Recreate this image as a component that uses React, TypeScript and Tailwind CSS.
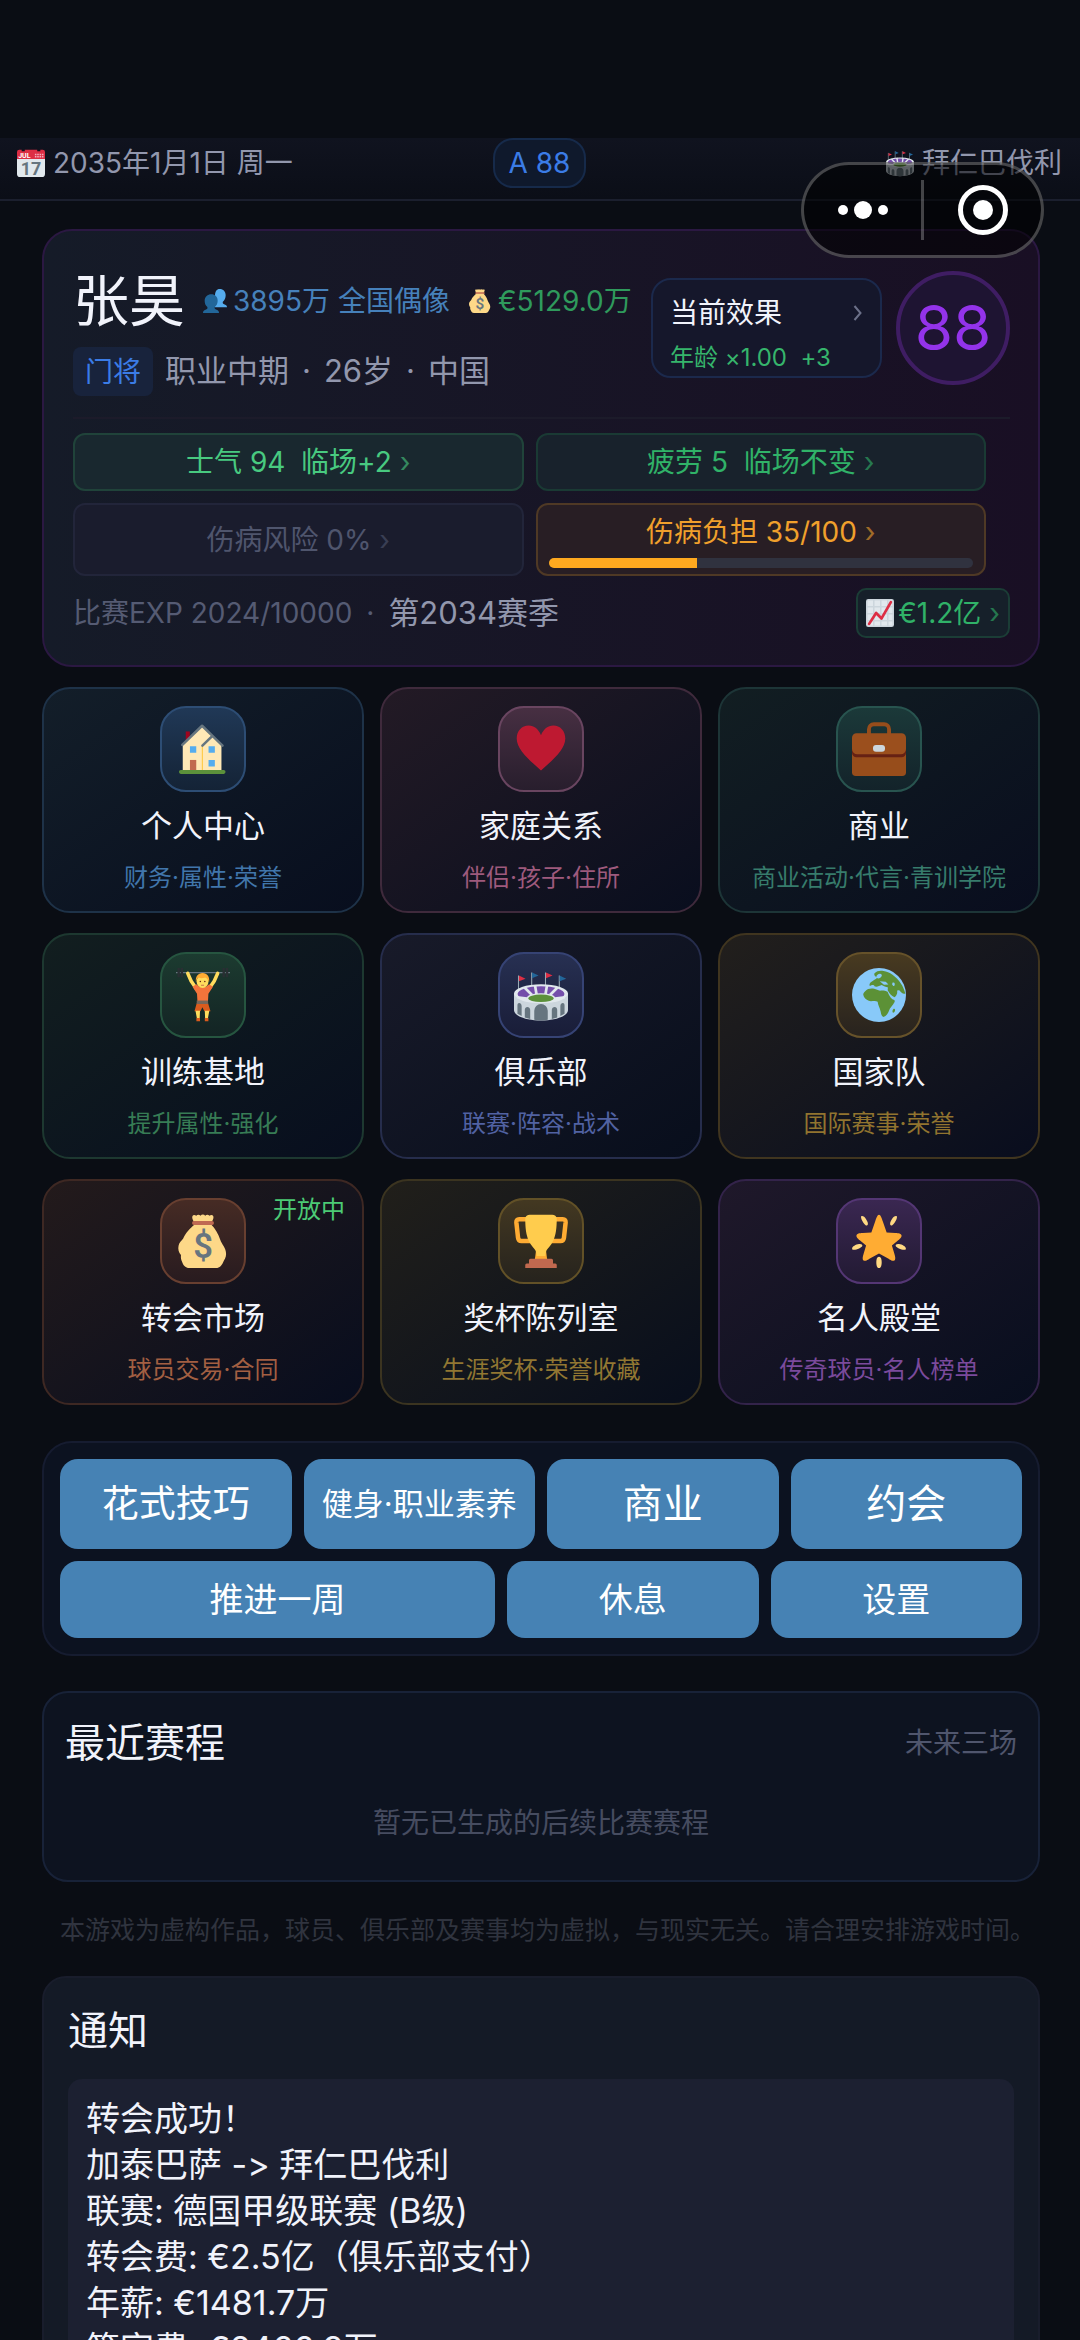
import { useState } from "react";
import type { ReactNode } from "react";

type Entry = {
  id: string;
  title: string;
  desc: string;
  icon: ReactNode;
  card: string;
  tile: string;
  descColor: string;
  badge?: string;
};

type Chip = {
  id: string;
  text: string;
  style: string;
  progress?: number;
};

/* ---------- アイコン ---------- */

function CalendarIcon() {
  return (
    <svg viewBox="0 0 36 36" className="h-7 w-7 shrink-0" aria-hidden="true">
      <path fill="#E1E8ED" d="M36 32a4 4 0 0 1-4 4H4a4 4 0 0 1-4-4V9h36z" />
      <path fill="#DD2E44" d="M3 1h3v2h4V1h16v2h4V1h3a3 3 0 0 1 3 3v9H0V4a3 3 0 0 1 3-3z" />
      <path fill="#F4ABBA" d="M23 6h2v2h-2zM26 6h2v2h-2zM29 6h2v2h-2zM32 6h2v2h-2zM23 9h2v2h-2zM26 9h2v2h-2zM29 9h2v2h-2zM32 9h2v2h-2z" />
      <text x="1.500" y="11" fontSize="9" fontWeight="700" fontFamily="Roboto, sans-serif" fill="#FFFFFF">
        JUL
      </text>
      <text x="18" y="33" fontSize="23" fontWeight="700" textAnchor="middle" fontFamily="Roboto, sans-serif" fill="#66757F">
        17
      </text>
    </svg>
  );
}

function FansIcon() {
  return (
    <svg viewBox="0 0 36 36" className="h-6 w-6 shrink-0" aria-hidden="true">
      <path
        fill="#55ACEE"
        d="M25 0c5.500 0 9 4 9 9.500 0 4.200-1.600 7.700-4.200 9.600-.8 2.400.4 3.400 2.700 4.200C34.800 24.100 36 25 36 27.500H18V10c0-6 2.500-10 7-10z"
      />
      <path
        fill="#226699"
        d="M12.500 8c5.500 0 9.500 4 9.500 9.700 0 4-1.700 7.500-4.300 9.300-.8 2.400.4 3.300 2.600 4.100 2.700.9 3.700 2.200 3.700 4.900H0c0-2.700 1.200-4 3.800-4.900 2.300-.8 3.500-1.700 2.700-4.100C3.900 25.200 2.500 21.700 2.500 17.700 2.500 12 7 8 12.500 8z"
      />
    </svg>
  );
}

function MoneyBagIcon({ className }: { className: string }) {
  return (
    <svg viewBox="0 0 36 36" className={className} aria-hidden="true">
      <path
        fill="#FDD888"
        d="M12.200 5.500C11 3.800 10.500 2.300 11 1.300c.5-.9 1.700-.8 2.500-.1.900-1 2-1 2.800-.1.900-1 2.300-1 3.200 0 .9-.9 2-.9 2.800.1.800-.7 2-.8 2.500.1.500 1 0 2.500-1.200 4.200v1.700c2.400 2.500 4.700 6.200 5.900 10 1 3.200 3.900 5.200 3.900 9.400 0 2.300-1.200 3.900-1.900 5.400-.9 2.200-2.300 4-4.800 4H8.900c-2.500 0-4-1.700-4.800-4-.6-1.400-1-2.200-.8-4.600-1.500-1.700-2.100-4.100-1.600-6.300.4-2.100 1.900-2.900 3.100-4.700 1.500-3.700 4.900-7 7.400-9.200z"
      />
      <path fill="#BF6952" d="M12 4.700h12a1.300 1.300 0 0 1 0 2.600H12a1.300 1.300 0 0 1 0-2.600z" />
      <text x="18" y="29.500" fontSize="23" fontWeight="600" textAnchor="middle" fontFamily="Roboto, sans-serif" fill="#67757F">
        $
      </text>
    </svg>
  );
}

function ChartIcon() {
  return (
    <svg viewBox="0 0 36 36" className="h-7 w-7 shrink-0" aria-hidden="true">
      <rect width="36" height="36" rx="3" fill="#CCD6DD" />
      <path fill="#E1E8ED" d="M2 2h7v7H2zM11 2h7v7h-7zM20 2h7v7h-7zM29 2h5v7h-5zM2 11h7v7H2zM11 11h7v7h-7zM20 11h7v7h-7zM29 11h5v7h-5zM2 20h7v7H2zM11 20h7v7h-7zM20 20h7v7h-7zM29 20h5v7h-5zM2 29h7v5H2zM11 29h7v5h-7zM20 29h7v5h-7zM29 29h5v5h-5z" />
      <path fill="none" stroke="#DD2E44" strokeWidth="3.500" strokeLinecap="round" strokeLinejoin="round" d="M4 32l9-14 7 7L32 4" />
    </svg>
  );
}

function StadiumIcon({ className }: { className: string }) {
  return (
    <svg viewBox="0 0 36 36" className={className} aria-hidden="true">
      <path stroke="#99AAB5" strokeWidth=".7" d="M3 5v12M11.800 3v10M21 3v10M30.200 5v12" />
      <path fill="#DD2E44" d="M3.300 5l4.400 2.100-4.400 1.800zM21.300 3l4.400 2-4.400 1.900z" />
      <path fill="#226699" d="M12 3l4.400 2L12 6.900zM30.400 5l4.400 2.100-4.400 1.800z" />
      <path fill="#CCD6DD" d="M0 17h36v11c0 4-8 7-18 7S0 32 0 28z" />
      <path
        fill="#66757F"
        d="M13.500 34.500v-6a4.500 4.500 0 0 1 9 0v6c-3 .5-6 .5-9 0zM7.200 33v-5c0-3 3.600-2.500 3.600 0v6zM25.200 34v-6c0-2.500 3.600-3 3.600 0v5zM2.300 30.500V25c0-2.600 2.800-1.800 2.800.5V32zM30.900 32v-6.500c0-2.300 2.800-3.100 2.800-.5v5.500z"
      />
      <ellipse cx="18" cy="17" rx="18" ry="6.200" fill="#E1E8ED" />
      <ellipse cx="18" cy="17.300" rx="15.600" ry="5.200" fill="#744EAA" />
      <path stroke="#E1E8ED" strokeWidth="1.800" d="M14 11.500l1 6M22 11.500l-1 6M7 13l5 5M29 13l-5 5M2 19.500l8 1M34 19.500l-8 1" />
      <path fill="#E1E8ED" d="M3 20.500c3 2 8 2.900 15 2.900s12-.9 15-2.900z" />
      <ellipse cx="18" cy="20" rx="9.400" ry="3.200" fill="#E1E8ED" />
      <ellipse cx="18" cy="20.200" rx="8.500" ry="2.500" fill="#5C913B" />
    </svg>
  );
}

function HouseIcon() {
  return (
    <svg viewBox="0 0 36 36" className="h-[54px] w-[54px]" aria-hidden="true">
      <path fill="#A0041E" d="M6.500 6.300h2.700v7H6.500z" />
      <path fill="#FFE8B6" d="M4.500 15L17.400 2.500 24.300 9l6 6.300V32.500H4.500z" />
      <path fill="#FFCC4D" d="M17.200 16h.8v16h-.8z" />
      <path
        fill="none"
        stroke="#66757F"
        strokeWidth="1.700"
        strokeLinecap="round"
        strokeLinejoin="round"
        d="M4.200 15.300L17.400 2.500l6.900 6.700 6.700 6.500M17.600 15.700l6.700-6.500"
      />
      <path fill="#55ACEE" d="M9.300 16.200h4.200v4.300H9.300zM21.700 16.200h4.200v4.300h-4.200zM21.700 25.300h4.200v4.300h-4.200z" />
      <path fill="#C1694F" d="M9.300 25.300h4.200v7H9.300z" />
      <rect x="2" y="32" width="31" height="2.600" rx="1.200" fill="#5C913B" />
    </svg>
  );
}

function HeartIcon() {
  return (
    <svg viewBox="0 0 36 36" className="h-[54px] w-[54px]" aria-hidden="true">
      <path
        fill="#BE1931"
        d="M18 8.800C16.400 4.700 13.400 2.300 9.800 2.300 5.200 2.300 1.800 5.900 1.800 11c0 7.600 8.700 14.400 16.200 21.400C25.500 25.400 34.200 18.600 34.200 11c0-5.100-3.400-8.700-8-8.700-3.600 0-6.600 2.400-8.200 6.500z"
      />
    </svg>
  );
}

function BriefcaseIcon() {
  return (
    <svg viewBox="0 0 36 36" className="h-[54px] w-[54px]" aria-hidden="true">
      <path
        fill="none"
        stroke="#974D1B"
        strokeWidth="2.600"
        d="M11.300 9V4.800a3.300 3.300 0 0 1 3.300-3.300h6.800a3.300 3.300 0 0 1 3.300 3.300V9"
      />
      <path fill="#974D1B" d="M0 19h36v14.500a2.500 2.500 0 0 1-2.500 2.500h-31A2.500 2.500 0 0 1 0 33.500z" />
      <path fill="#662113" d="M0 18h36v2.500a3 3 0 0 1-3 3H3a3 3 0 0 1-3-3z" />
      <path fill="#9B4F1D" d="M3 7.500h30a3 3 0 0 1 3 3V18a3.500 3.500 0 0 1-3.500 3.500h-29A3.500 3.500 0 0 1 0 18v-7.500a3 3 0 0 1 3-3z" />
      <rect x="14" y="15.300" width="8" height="4.600" rx="2" fill="#CCD6DD" />
    </svg>
  );
}

function LifterIcon() {
  return (
    <svg viewBox="0 0 36 36" className="h-[54px] w-[54px]" aria-hidden="true">
      <path stroke="#67757F" strokeWidth=".8" d="M0 3.100h36" />
      <path fill="#292F33" d="M1 0h1.600v6.200H1zM3.100 0h1.600v6.200H3.100zM31 0h1.600v6.200H31zM33.200 0h1.600v6.200h-1.600z" />
      <path stroke="#FFDC5D" strokeWidth="2.300" strokeLinecap="round" fill="none" d="M7.800 3.500l2.300 5.200 3.400 5M27.800 3.500l-2.300 5.200-3.400 5" />
      <path fill="#F4743B" d="M11 12.500l2.500-1.700 2.300 1.900h4l2.300-1.900 2.500 1.700-3 4.700-.3 5.300h-7l-.3-5.300z" />
      <path fill="#DA5B1E" d="M13.800 23.500h7.600l1.600 5.300h-4.100l-1.300-2.700-1.300 2.700h-4z" />
      <path fill="#78665A" d="M13.800 21.700h7.600v2.300h-7.600z" />
      <path fill="#FFDC5D" d="M13 28.500h3l-.2 5h-1.900zM19.200 28.500h3l-.9 5h-1.900z" />
      <path fill="#DA5B1E" d="M13.600 33.300h2.400v2.200h-2.400zM19.200 33.300h2.400v2.200h-2.400z" />
      <ellipse cx="17.700" cy="9" rx="4" ry="4.300" fill="#FFDC5D" />
      <path fill="#FFAC33" d="M13.300 9.300c-.5-3.700 1.400-6 4.400-6s4.900 2.300 4.400 6c-.7-1.500-1.700-2.700-2.700-3-2 .8-4 .4-4.800.2-.8.900-1 1.900-1.300 2.800z" />
      <circle cx="16.200" cy="9" r=".5" fill="#662113" />
      <circle cx="19.200" cy="9" r=".5" fill="#662113" />
      <path stroke="#C1694F" strokeWidth=".6" d="M16.700 11.500h2" />
    </svg>
  );
}

function GlobeIcon() {
  return (
    <svg viewBox="0 0 36 36" className="h-[54px] w-[54px]" aria-hidden="true">
      <circle cx="18" cy="18" r="18" fill="#88C9F9" />
      <path
        fill="#5C9136"
        d="M15 3.500C16.500 1.800 19 1.500 21 2c2 .3 4 1 6 2.500 4.500 3.200 7.500 8 8.500 12.500-1.500.8-2.600-.8-3.800-2-1.400-.4-2.400.4-2.900 1.600-.8 1.200-1.700.8-2.600-.4-1.600-.4-2.200-1.800-1.200-3-1.800-.6-3.600-.6-5.200-1.800-1.400.6-3 1.400-4.600 1-.6-1.400-2.200-1.200-3.200-.4-1-1 .4-2.800 1.800-3.400 1.200-.8 2.600-1.200 3-2.400-1.200-.4-2.400-1.400-1.800-2.700z"
      />
      <path fill="#88C9F9" d="M16.800 4.600c1.800-1.400 3.600-.6 3 .8s-2.200 2-3.200 1.300c-.6-.6-.4-1.500.2-2.100zM18.500 8.800l4 .4 1.800 1.800-3 .2zM27 9.800c1.600-.4 2 1.200 1 2.400-1-.2-1.600-1.400-1-2.400z" />
      <path
        fill="#5C9136"
        d="M8.800 15.500c1.400-1.700 3.900-2 6-1.600 1.500.2 2.400 1.100 3.900 1.200 1.500-.4 3.600 0 5 .7.9 1.900 1.700 4.100 3.500 5.200 1 .3 1.600.6 1.200 1.700-1 2.100-3.200 3.700-3.800 6-.6 1.600-1.600 3.500-3.600 4-1.500-.5-1.600-2.500-2-4-.4-2.200-1.700-4-1.900-6.200-1.700-1.200-4 .1-5.900-.6-1.800-.6-3.400-2.200-3.700-4-.1-.9.600-1.700 1.300-2.400z"
      />
      <path fill="#5C9136" d="M27.500 27.500c.9-.8 1.500.1 1.100 1.200s-1.500 1.600-1.600.5c-.1-.6.1-1.300.5-1.700zM24 11.500c1.800-.6 4 .2 5.500 2.200 1.200 1.800.8 4.600-1.200 5.800-2-.6-3.400-2.600-4.500-4.600z" />
    </svg>
  );
}

function TrophyIcon() {
  return (
    <svg viewBox="0 0 36 36" className="h-[54px] w-[54px]" aria-hidden="true">
      <path
        fill="none"
        stroke="#FFAC33"
        strokeWidth="3"
        strokeLinejoin="round"
        d="M9 3.500H3.500c-1.500 0-2 .8-1.900 2.300l1.100 10c.2 1.600 1 2.200 2.300 2.200h6M27 3.500h5.500c1.500 0 2 .8 1.900 2.300l-1.100 10c-.2 1.600-1 2.200-2.300 2.200h-6"
      />
      <path fill="#FFAC33" d="M15 22h6l1.200 9h-8.400z" />
      <path
        fill="#FFCC4D"
        d="M10.500.500h15C27 .500 28.500 1.500 28.500 3c0 6-.5 11-2.500 15.200-1.600 3.400-3.600 4.600-4.500 6.500-.4 1-.6 2.200-.6 3.300h-5.800c0-1.100-.2-2.300-.6-3.300-.9-1.900-2.900-3.100-4.500-6.500C8 14 7.500 9 7.500 3c0-1.500 1.500-2.500 3-2.500z"
      />
      <path fill="#C1694F" d="M11 29.800h14a1 1 0 0 1 1 1V33h1.500a1 1 0 0 1 1 1v2h-21v-2a1 1 0 0 1 1-1H10v-2.200a1 1 0 0 1 1-1z" />
    </svg>
  );
}

function StarIcon() {
  return (
    <svg viewBox="0 0 36 36" className="h-[54px] w-[54px]" aria-hidden="true">
      <path
        fill="#FFD983"
        d="M6.300 1.400C7.700.7 9.400 3 10.300 5.200c.6 1.500.2 2.300-.4 2.500C8.600 7.900 5 2.400 6.300 1.400zM29.700 1.400c-1.400-.7-3.100 1.600-4 3.800-.6 1.500-.2 2.300.4 2.500 1.300.2 4.900-5.300 3.600-6.300zM.1 23.300c-.3-1.500 2.300-3 4.600-3.300 1.600-.2 2.200.4 2.200 1.100C6.700 22.500.7 25 .1 23.300zM35.900 23.300c.3-1.500-2.300-3-4.600-3.300-1.600-.2-2.200.4-2.200 1.100.2 1.400 6.200 3.900 6.800 2.200zM18 36c-1.600 0-2-2.800-1.700-5.200.2-1.700 1-2.300 1.700-2.300s1.500.6 1.700 2.300c.3 2.400-.1 5.200-1.700 5.200z"
      />
      <path
        fill="#FFAC33"
        d="M28.800 12.600c.9 0 3.700.1 4.200 1.500.4 1.300-1.500 2.800-2.200 3.400l-4.200 3.500 1.700 5.700c.3 1 1.100 3.500 0 4.300-1.200.8-3-.6-3.900-1.200L18 26.300l-6.400 3.500c-.9.600-2.700 2-3.900 1.200-1.100-.8-.3-3.300 0-4.300L9.400 21l-4.200-3.500C4.500 16.900 2.600 15.400 3 14.100c.5-1.400 3.300-1.500 4.200-1.500l5.700-.3 2.600-7.400C15.900 3.800 16.700.500 18 .500s2.100 3.300 2.500 4.400l2.600 7.400z"
      />
    </svg>
  );
}

/* ---------- データ ---------- */

const chips: Chip[] = [
  { id: "morale", text: "士气 94  临场+2", style: "border-[#20433a] bg-[#19282f] text-[#48ca80]" },
  { id: "fatigue", text: "疲劳 5  临场不变", style: "border-[#1a3a34] bg-[#18222c] text-[#30b268]" },
  { id: "risk", text: "伤病风险 0%", style: "border-[#22253a] bg-[#1a1c2d] text-[#4f556d]" },
  { id: "load", text: "伤病负担 35/100", style: "border-[#4f3925] bg-[#281e24] text-[#f0a02c]", progress: 35 },
];

const entries: Entry[] = [
  {
    id: "personal",
    title: "个人中心",
    desc: "财务·属性·荣誉",
    icon: <HouseIcon />,
    card: "border-[#1e3248] from-[#131e29] to-[#080e1e]",
    tile: "border-[#2d4d74] from-[#203856] to-[#142336]",
    descColor: "text-[#4176ab]",
  },
  {
    id: "family",
    title: "家庭关系",
    desc: "伴侣·孩子·住所",
    icon: <HeartIcon />,
    card: "border-[#3f2a3c] from-[#231a25] to-[#090e1e]",
    tile: "border-[#694560] from-[#472f42] to-[#281e2d]",
    descColor: "text-[#9e5a7d]",
  },
  {
    id: "business",
    title: "商业",
    desc: "商业活动·代言·青训学院",
    icon: <BriefcaseIcon />,
    card: "border-[#1d3537] from-[#121e22] to-[#090d1e]",
    tile: "border-[#28544f] from-[#1b3939] to-[#13232a]",
    descColor: "text-[#377c6c]",
  },
  {
    id: "training",
    title: "训练基地",
    desc: "提升属性·强化",
    icon: <LifterIcon />,
    card: "border-[#1d3830] from-[#121e1f] to-[#080e1e]",
    tile: "border-[#265540] from-[#1c3b30] to-[#132424]",
    descColor: "text-[#377c55]",
  },
  {
    id: "club",
    title: "俱乐部",
    desc: "联赛·阵容·战术",
    icon: <StadiumIcon className="h-[54px] w-[54px]" />,
    card: "border-[#262d4c] from-[#181a29] to-[#080e1c]",
    tile: "border-[#364374] from-[#273052] to-[#191d38]",
    descColor: "text-[#5162a2]",
  },
  {
    id: "national",
    title: "国家队",
    desc: "国际赛事·荣誉",
    icon: <GlobeIcon />,
    card: "border-[#40351f] from-[#221f1c] to-[#090d1e]",
    tile: "border-[#66522a] from-[#483a20] to-[#28231e]",
    descColor: "text-[#91742f]",
  },
  {
    id: "transfer",
    title: "转会市场",
    desc: "球员交易·合同",
    icon: <MoneyBagIcon className="h-[54px] w-[54px]" />,
    card: "border-[#3e2823] from-[#231a1b] to-[#080d1e]",
    tile: "border-[#683f30] from-[#462b24] to-[#281b1f]",
    descColor: "text-[#a25f42]",
    badge: "开放中",
  },
  {
    id: "trophies",
    title: "奖杯陈列室",
    desc: "生涯奖杯·荣誉收藏",
    icon: <TrophyIcon />,
    card: "border-[#3b3420] from-[#211f1a] to-[#080e1c]",
    tile: "border-[#625127] from-[#433821] to-[#26231d]",
    descColor: "text-[#917732]",
  },
  {
    id: "hall",
    title: "名人殿堂",
    desc: "传奇球员·名人榜单",
    icon: <StarIcon />,
    card: "border-[#33234a] from-[#1f182a] to-[#080e1e]",
    tile: "border-[#543674] from-[#3a2751] to-[#221a33]",
    descColor: "text-[#7b4a9c]",
  },
];

const notice = [
  "转会成功！",
  "加泰巴萨 -> 拜仁巴伐利",
  "联赛: 德国甲级联赛 (B级)",
  "转会费: €2.5亿（俱乐部支付）",
  "年薪: €1481.7万",
  "签字费: €2466.9万",
];

/* ---------- パーツ ---------- */

function ActionButton({ label, size, onClick }: { label: string; size: string; onClick: () => void }) {
  return (
    <button onClick={onClick} className={`rounded-[18px] bg-[#4682b4] whitespace-nowrap text-white ${size}`}>
      {label}
    </button>
  );
}

function Capsule() {
  return (
    <div className="absolute top-[162px] right-9 flex h-24 w-[243px] items-center rounded-full border-[3px] border-white/25 bg-black/55">
      <button aria-label="更多" className="flex h-full flex-1 items-center justify-center gap-[6px]">
        <span className="h-[10px] w-[10px] rounded-full bg-white" />
        <span className="h-[18px] w-[18px] rounded-full bg-white" />
        <span className="h-[10px] w-[10px] rounded-full bg-white" />
      </button>
      <span className="h-[60px] w-[3px] bg-white/25" />
      <button aria-label="关闭" className="flex h-full flex-1 items-center justify-center">
        <span className="flex h-[50px] w-[50px] items-center justify-center rounded-full border-[5px] border-white">
          <span className="h-5 w-5 rounded-full bg-white" />
        </span>
      </button>
    </div>
  );
}

export default function App() {
  const [selected, setSelected] = useState("");

  return (
    <div className="relative h-screen overflow-y-auto bg-[#0a0d14] font-['Inter','Noto_Sans_CJK_SC',sans-serif] text-[28px] text-[#f1f3fb] [font-feature-settings:'calt'_0] [scrollbar-width:none]">
      <header className="mt-[138px] grid grid-cols-[1fr_auto_1fr] items-center border-b-2 border-[#1b1f2e] bg-linear-to-b from-[#10131f] to-[#0b0e17] pr-[18px] pb-[11px] pl-[17px] leading-9 text-[#9297ad]">
        <div className="flex items-center gap-2">
          <CalendarIcon />
          <span>2035年1月1日 周一</span>
        </div>
        <div className="flex h-[50px] items-center rounded-[20px] border-2 border-[#162a4a] bg-[#0f192c] px-[14px] text-[#3b7ce6]">A 88</div>
        <div className="flex items-center justify-end gap-2">
          <StadiumIcon className="h-7 w-7 shrink-0" />
          <span>拜仁巴伐利</span>
        </div>
      </header>

      <main className="pt-7 pr-10 pl-[42px]">
        {/* 選手カード */}
        <section className="rounded-[30px] border-2 border-[#2b1842] bg-linear-to-r from-[#151b28] to-[#190f24] pt-[29px] pr-7 pb-[27px] pl-[29px]">
          <div className="flex items-center">
            <div className="min-w-0 flex-1">
              <div className="flex items-center pt-1 whitespace-nowrap">
                <h1 className="text-[56px] leading-[74px]">张昊</h1>
                <div className="ml-[18px] flex items-center gap-[6px] text-[#4681bb]">
                  <FansIcon />
                  <span>3895万 全国偶像</span>
                </div>
                <div className="ml-[18px] flex items-center gap-[6px] text-[#2f9a5c]">
                  <MoneyBagIcon className="h-6 w-6 shrink-0" />
                  <span>€5129.0万</span>
                </div>
              </div>
              <div className="mt-[9px] flex items-center gap-3 text-[31px] text-[#9297ad]">
                <span className="flex h-[49px] items-center rounded-lg bg-[#18233c] px-3 text-[28px] text-[#3b7ce6]">门将</span>
                <div className="flex items-center gap-[13px] whitespace-nowrap">
                  <span>职业中期</span>
                  <span>·</span>
                  <span>26岁</span>
                  <span>·</span>
                  <span>中国</span>
                </div>
              </div>
            </div>
            <button
              onClick={() => setSelected("effect")}
              className="mr-[14px] w-[231px] rounded-[20px] border-2 border-[#1b294c] bg-[#15172b] px-[17px] pt-[15px] text-left"
            >
              <span className="flex items-center justify-between leading-9">
                <span>当前效果</span>
                <svg viewBox="0 0 10 16" className="h-4 w-[10px]" aria-hidden="true">
                  <path d="M1.500 1l6 7-6 7" fill="none" stroke="#6b7088" strokeWidth="2" />
                </svg>
              </span>
              <span className="mt-[9px] block text-2xl leading-9 whitespace-pre text-[#36b56c]">{"年龄 ×1.00  +3"}</span>
            </button>
            <div className="flex h-[114px] w-[114px] items-center justify-center rounded-full border-4 border-[#3f1d63] bg-[#1e1432] text-[62px] leading-none text-[#9333ea]">
              88
            </div>
          </div>

          <div className="mt-[21px] border-t-2 border-[#1c1b2a]" />

          <div className="mt-[14px] grid grid-cols-2 gap-3 pr-6">
            {chips.map((c) => (
              <button
                key={c.id}
                onClick={() => setSelected(c.id)}
                className={`flex min-h-[58px] flex-col justify-center rounded-xl border-2 px-[11px] leading-[34px] ${c.style} ${
                  c.progress ? "pt-[10px] pb-[6px]" : ""
                }`}
              >
                <span className="w-full text-center whitespace-pre">
                  {c.text} <span className="opacity-60">›</span>
                </span>
                {c.progress && (
                  <span className="mt-[9px] block h-[10px] w-full overflow-hidden rounded-full bg-[#30323f]">
                    <span className="block h-full bg-[#ffa91f]" style={{ width: `${c.progress}%` }} />
                  </span>
                )}
              </button>
            ))}
          </div>

          <div className="mt-3 flex items-center justify-between">
            <div className="flex items-center gap-[14px] text-[#555b73]">
              <span>比赛EXP 2024/10000</span>
              <span>·</span>
              <span className="text-[31px] text-[#9297ad]">第2034赛季</span>
            </div>
            <button
              onClick={() => setSelected("market")}
              className="flex h-[50px] items-center gap-1 rounded-[10px] border-2 border-[#1b3d36] bg-[#16202a] px-2 text-[#30b268]"
            >
              <ChartIcon />
              <span>
                €1.2亿 <span className="opacity-60">›</span>
              </span>
            </button>
          </div>
        </section>

        {/* メニュー */}
        <nav className="mt-5 grid grid-cols-3 gap-x-4 gap-y-5">
          {entries.map((e) => (
            <button
              key={e.id}
              onClick={() => setSelected(e.id)}
              className={`relative flex flex-col items-center rounded-[28px] border-2 bg-linear-to-br py-[17px] ${e.card}`}
            >
              <span className={`flex h-[86px] w-[86px] items-center justify-center rounded-[26px] border-2 bg-linear-to-b ${e.tile}`}>
                {e.icon}
              </span>
              <span className="mt-[14px] text-[31px] leading-10">{e.title}</span>
              <span className={`mt-4 text-2xl whitespace-nowrap ${e.descColor}`}>{e.desc}</span>
              {e.badge && <span className="absolute top-[13px] right-[17px] text-2xl text-[#4ccb75]">{e.badge}</span>}
            </button>
          ))}
        </nav>

        {/* 行動ボタン */}
        <section className="mt-9 rounded-[30px] border-2 border-[#161c30] bg-[#0c1220] p-4">
          <div className="grid h-[90px] grid-cols-4 gap-3">
            <ActionButton label="花式技巧" size="text-[37px]" onClick={() => setSelected("skill")} />
            <ActionButton label="健身·职业素养" size="text-[31px]" onClick={() => setSelected("gym")} />
            <ActionButton label="商业" size="text-[40px]" onClick={() => setSelected("biz")} />
            <ActionButton label="约会" size="text-[40px]" onClick={() => setSelected("date")} />
          </div>
          <div className="mt-3 grid h-[77px] grid-cols-[1.73fr_1fr_1fr] gap-3">
            <ActionButton label="推进一周" size="text-[34px]" onClick={() => setSelected("next")} />
            <ActionButton label="休息" size="text-[34px]" onClick={() => setSelected("rest")} />
            <ActionButton label="设置" size="text-[34px]" onClick={() => setSelected("settings")} />
          </div>
        </section>

        {/* 日程 */}
        <section className="mt-[35px] rounded-[26px] border-2 border-[#182238] bg-[#0d1320] px-[21px] pt-[23px] pb-1">
          <div className="flex items-center justify-between">
            <h2 className="text-[40px] leading-[54px]">最近赛程</h2>
            <span className="text-[#50566d]">未来三场</span>
          </div>
          <p className="py-9 text-center leading-[34px] text-[#464c60]">暂无已生成的后续比赛赛程</p>
        </section>

        <p className="mt-[30px] pl-[18px] text-[25px] leading-9 whitespace-nowrap text-[#30343f]">
          本游戏为虚构作品，球员、俱乐部及赛事均为虚拟，与现实无关。请合理安排游戏时间。
        </p>

        {/* 通知 */}
        <section className="mt-7 rounded-3xl border-2 border-[#191d2c] bg-[#141a26] px-6 pt-[26px] pb-6">
          <h2 className="text-[40px] leading-[54px]">通知</h2>
          <div className="mt-[21px] rounded-[14px] bg-[#1c2031] px-[18px] py-[17px] text-[34px] leading-[46px]">
            {notice.map((line) => (
              <p key={line}>{line}</p>
            ))}
          </div>
        </section>
      </main>

      <Capsule />
      <p className="sr-only" role="status">
        {selected}
      </p>
    </div>
  );
}
